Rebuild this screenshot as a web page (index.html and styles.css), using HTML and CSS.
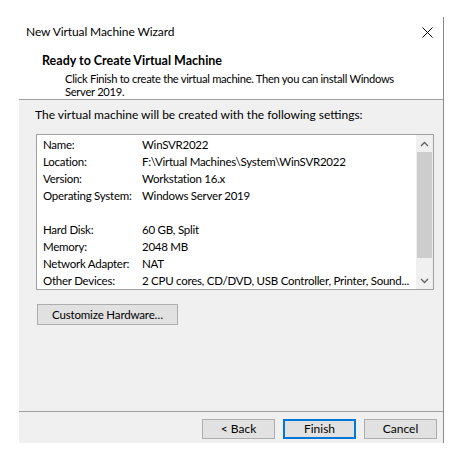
FILE: index.html
```html
<!DOCTYPE html>
<html>
<head>
<meta charset="utf-8">
<link rel="stylesheet" href="styles.css">
</head>
<body>
<div class="window">
  <div class="titlebar">
    <span class="title">New Virtual Machine Wizard</span>
    <svg class="close" width="11" height="11" viewBox="0 0 11 11"><path d="M0.5 0.5 L10.5 10.5 M10.5 0.5 L0.5 10.5" stroke="#000" stroke-width="1" fill="none"/></svg>
  </div>
  <div class="header">
    <div class="head-title">Ready to Create Virtual Machine</div>
    <div class="head-desc">Click Finish to create the virtual machine. Then you can install Windows<br>Server 2019.</div>
  </div>
  <div class="content">
    <div class="intro">The virtual machine will be created with the following settings:</div>
    <div class="listbox">
      <div class="rows">
        <div class="row"><span class="lbl">Name:</span><span class="val">WinSVR2022</span></div>
        <div class="row"><span class="lbl">Location:</span><span class="val">F:\Virtual Machines\System\WinSVR2022</span></div>
        <div class="row"><span class="lbl">Version:</span><span class="val">Workstation 16.x</span></div>
        <div class="row"><span class="lbl">Operating System:</span><span class="val">Windows Server 2019</span></div>
        <div class="row"><span class="lbl"></span><span class="val"></span></div>
        <div class="row"><span class="lbl">Hard Disk:</span><span class="val">60 GB, Split</span></div>
        <div class="row"><span class="lbl">Memory:</span><span class="val">2048 MB</span></div>
        <div class="row"><span class="lbl">Network Adapter:</span><span class="val">NAT</span></div>
        <div class="row"><span class="lbl">Other Devices:</span><span class="val">2 CPU cores, CD/DVD, USB Controller, Printer, Sound...</span></div>
      </div>
      <div class="scrollbar">
        <div class="sb-btn"><svg width="9" height="6" viewBox="0 0 9 6"><path d="M1 5 L4.5 1.5 L8 5" stroke="#606060" stroke-width="1.3" fill="none"/></svg></div>
        <div class="sb-track"><div class="sb-thumb"></div></div>
        <div class="sb-btn"><svg width="9" height="6" viewBox="0 0 9 6"><path d="M1 1 L4.5 4.5 L8 1" stroke="#606060" stroke-width="1.3" fill="none"/></svg></div>
      </div>
    </div>
    <button class="btn custom">Customize Hardware…</button>
  </div>
  <div class="footer">
    <button class="btn">&lt; Back</button>
    <button class="btn default">Finish</button>
    <button class="btn">Cancel</button>
  </div>
</div>
</body>
</html>
```

FILE: styles.css
```css
html, body {
  margin: 0;
  padding: 0;
  background: #ffffff;
}
body {
  font-family: Lato, "Noto Sans", sans-serif;
  font-size: 12px;
  color: #000;
  width: 452px;
  height: 451px;
  overflow: hidden;
}
.window {
  margin: 17px 0 0 19px;
  width: 424px;
  height: 426px;
  border-right: 1px solid #8a8a8a;
  background: #f0f0f0;
  display: flex;
  flex-direction: column;
}
.titlebar {
  height: 30px;
  background: #fff;
  display: flex;
  align-items: center;
  justify-content: space-between;
  padding: 0 10px 0 7px;
}
.title {
  line-height: 16px;
  letter-spacing: -0.1px;
}
.close {
  display: block;
}
.header {
  background: #fff;
  height: 46px;
  padding: 6px 0 0 23px;
  border-bottom: 1px solid #a0a0a0;
  white-space: nowrap;
}
.head-title {
  font-weight: bold;
  font-size: 12.5px;
  line-height: 16px;
}
.head-desc {
  margin: 3px 0 0 23px;
  line-height: 13px;
  font-size: 11.2px;
  letter-spacing: -0.3px;
}
.content {
  flex: 1;
  padding: 7px 0 0 16px;
}
.intro {
  line-height: 16px;
  white-space: nowrap;
}
.listbox {
  margin: 11px 0 0 1px;
  width: 396px;
  height: 154px;
  border: 1px solid #a0a0a0;
  background: #fff;
  display: flex;
  overflow: hidden;
}
.rows {
  flex: 1;
  min-width: 0;
  overflow: hidden;
  padding: 1px 0 0 6px;
  font-size: 11.5px;
  letter-spacing: -0.25px;
}
.row {
  display: flex;
  height: 17px;
  line-height: 17px;
  white-space: nowrap;
}
.lbl {
  width: 99px;
  flex: none;
}
.scrollbar {
  width: 17px;
  flex: none;
  display: flex;
  flex-direction: column;
  background: #f0f0f0;
}
.sb-btn {
  height: 17px;
  display: flex;
  align-items: center;
  justify-content: center;
}
.sb-btn svg {
  display: block;
}
.sb-track {
  flex: 1;
  padding: 0 1px;
}
.sb-thumb {
  height: 106px;
  background: #cdcdcd;
}
.btn {
  font-family: inherit;
  font-size: 12px;
  color: #000;
  background: #e1e1e1;
  border: 1px solid #adadad;
  padding: 0;
  margin: 0;
  height: 20px;
  line-height: 16px;
}
.custom {
  display: block;
  margin: 14px 0 0 2px;
  width: 141px;
  height: 21px;
  font-size: 11.5px;
  letter-spacing: -0.15px;
}
.footer {
  height: 32px;
  border-top: 1px solid #a0a0a0;
  display: flex;
  justify-content: flex-end;
  align-items: flex-start;
  gap: 8px;
  padding: 7px 6px 0 0;
  box-sizing: border-box;
}
.footer .btn {
  width: 73px;
}
.default {
  border: 2px solid #0078d7;
}
```
